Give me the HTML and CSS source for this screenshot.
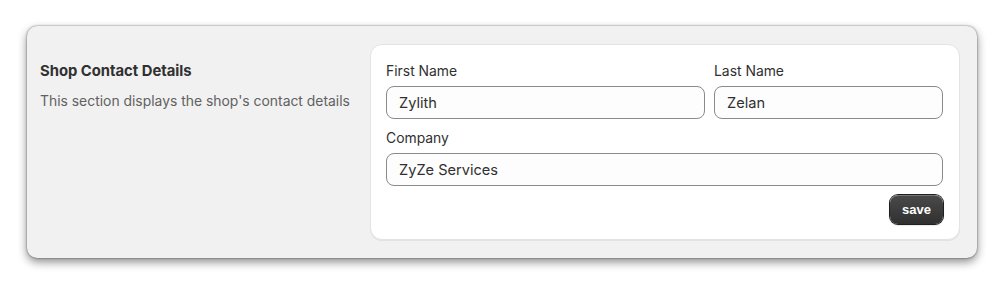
FILE: index.html
```html
<!DOCTYPE html>
<html lang="en">
<head>
<meta charset="utf-8">
<title>Shop Contact Details</title>
<link rel="stylesheet" href="styles.css">
</head>
<body>
  <section class="panel">
    <div class="intro">
      <h2 class="intro-title">Shop Contact Details</h2>
      <p class="intro-text">This section displays the shop's contact details</p>
    </div>
    <form class="card">
      <div class="row row-two">
        <label class="field">
          <span class="field-label">First Name</span>
          <input class="field-input" type="text" value="Zylith">
        </label>
        <label class="field">
          <span class="field-label">Last Name</span>
          <input class="field-input" type="text" value="Zelan">
        </label>
      </div>
      <div class="row">
        <label class="field">
          <span class="field-label">Company</span>
          <input class="field-input" type="text" value="ZyZe Services">
        </label>
      </div>
      <div class="actions">
        <button class="save-btn" type="button">save</button>
      </div>
    </form>
  </section>
</body>
</html>
```

FILE: styles.css
```css
* { box-sizing: border-box; }

html, body {
  margin: 0;
  padding: 0;
  background: #ffffff;
}

body {
  font-family: Inter, "Noto Sans", sans-serif;
  color: #303030;
  padding: 26px 0 28px 27px;
  min-height: 286px;
}

.panel {
  width: 950px;
  height: 232px;
  background: #f1f1f1;
  border-radius: 10px;
  box-shadow: 0 0 2px rgba(0, 0, 0, 0.55), 0 4px 10px rgba(0, 0, 0, 0.45);
  padding: 18px 17px 18px 13px;
  display: flex;
}

.intro {
  width: 330px;
  flex: none;
  padding-top: 17px;
}

.intro-title {
  margin: 0;
  font-size: 14.8px;
  line-height: 20px;
  font-weight: 650;
  color: #303030;
}

.intro-text {
  margin: 10px 0 0;
  font-size: 13.9px;
  line-height: 20px;
  color: #616161;
}

.card {
  flex: 1;
  background: #ffffff;
  border: 1px solid #e3e3e3;
  border-radius: 12px;
  box-shadow: 0 1px 0 rgba(26, 26, 26, 0.07);
  padding: 16px 16px 15px 15px;
  display: flex;
  flex-direction: column;
  gap: 9px;
  margin: 0;
}

.row {
  display: grid;
  grid-template-columns: 1fr;
}

.row-two {
  grid-template-columns: 319px 1fr;
  column-gap: 9px;
}

.field {
  display: flex;
  flex-direction: column;
}

.field-label {
  font-size: 13.9px;
  line-height: 20px;
  color: #303030;
  margin-bottom: 5px;
}

.field-input {
  height: 33px;
  width: 100%;
  border: 1px solid #8a8a8a;
  border-radius: 8px;
  background: #fdfdfd;
  padding: 0 12px;
  font-family: Inter, "Noto Sans", sans-serif;
  font-size: 14.6px;
  color: #303030;
  outline: none;
}

.actions {
  display: flex;
  justify-content: flex-end;
}

.save-btn {
  height: 29px;
  padding: 0 12px;
  border: none;
  border-radius: 8px;
  background: linear-gradient(#4a4a4a, #303030);
  box-shadow: 0 0 0 1px #1f1f1f, inset 0 1px 0 rgba(255, 255, 255, 0.25), 0 1px 2px rgba(0, 0, 0, 0.3);
  color: #ffffff;
  font-family: "Liberation Sans", Arial, sans-serif;
  font-weight: 700;
  font-size: 13px;
  cursor: pointer;
}
```
